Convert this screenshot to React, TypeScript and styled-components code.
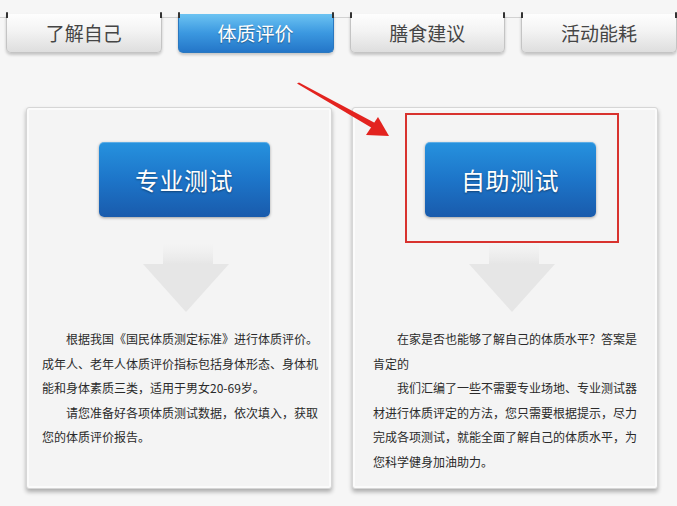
import React from "react";
import styled, { createGlobalStyle, css } from "styled-components";

const GlobalStyle = createGlobalStyle`
  html, body {
    margin: 0;
    padding: 0;
    background: #f6f6f6;
  }
  body {
    font-family: "Noto Sans CJK SC", "Noto Sans", sans-serif;
  }
`;

const tabs = ["了解自己", "体质评价", "膳食建议", "活动能耗"];

const panels = [
  {
    label: "专业测试",
    marked: false,
    textWidth: 277,
    textLeft: 15,
    paragraphs: [
      "根据我国《国民体质测定标准》进行体质评价。成年人、老年人体质评价指标包括身体形态、身体机能和身体素质三类，适用于男女20-69岁。",
      "请您准备好各项体质测试数据，依次填入，获取您的体质评价报告。",
    ],
  },
  {
    label: "自助测试",
    marked: true,
    textWidth: 265,
    textLeft: 20,
    paragraphs: [
      "在家是否也能够了解自己的体质水平？答案是肯定的",
      "我们汇编了一些不需要专业场地、专业测试器材进行体质评定的方法，您只需要根据提示，尽力完成各项测试，就能全面了解自己的体质水平，为您科学健身加油助力。",
    ],
  },
];

const Page = styled.div`
  position: relative;
  width: 677px;
  height: 506px;
  overflow: hidden;
  background: #f6f6f6;
`;

const TabBar = styled.div`
  display: flex;
  gap: 16px;
  padding: 14px 0 0 6px;
  background: linear-gradient(#d2d2d2, #d2d2d2) 0 17px / 100% 1px no-repeat;
`;

const Tab = styled.div<{ $active?: boolean }>`
  position: relative;
  width: 154px;
  height: 36px;
  padding-bottom: 2px;
  display: flex;
  align-items: center;
  justify-content: center;
  font-size: 19px;
  color: #454545;
  border: 1px solid #c4c4c4;
  border-top: none;
  border-radius: 0 0 5px 5px;
  background: linear-gradient(#fefefe, #f3f3f3 45%, #dedede);
  box-shadow: 0 2px 3px rgba(0, 0, 0, 0.2);

  ${(p) =>
    p.$active &&
    css`
      color: #fff;
      border-color: #2a78c0;
      background: linear-gradient(#6cc3f2, #3b98e0 50%, #2476c8);
      text-shadow: 0 1px 1px rgba(0, 0, 0, 0.35);
    `}

  &::before,
  &::after {
    content: "";
    position: absolute;
    top: -2px;
    width: 2px;
    height: 6px;
    background: #333;
    border-radius: 1px 1px 0 0;
  }
  &::before {
    left: -1px;
  }
  &::after {
    right: -1px;
  }
`;

const PanelRow = styled.div`
  display: flex;
  gap: 20px;
  padding: 54px 0 0 26px;
`;

const Panel = styled.div`
  width: 304px;
  height: 380px;
  display: flex;
  flex-direction: column;
  background: #f4f4f4;
  border: 1px solid #d6d6d6;
  border-radius: 3px;
  box-shadow: inset 0 0 0 2px #fbfbfb, 0 3px 4px rgba(0, 0, 0, 0.3);
`;

const Visual = styled.div`
  display: flex;
  flex-direction: column;
  align-items: center;
  padding: 5px 0 0 13px;
`;

const Highlight = styled.div<{ $marked?: boolean }>`
  padding: 27px 21px 24px 18px;
  border: 2px solid ${(p) => (p.$marked ? "#d8322e" : "transparent")};
`;

const BlueButton = styled.div`
  width: 171px;
  height: 75px;
  display: flex;
  align-items: center;
  justify-content: center;
  border-radius: 5px;
  background: linear-gradient(#2692de, #1d75c9 50%, #195bac);
  box-shadow: 0 1px 3px rgba(0, 0, 0, 0.35), inset 0 1px 0 rgba(255, 255, 255, 0.25);
  color: #fff;
  font-size: 24px;
  letter-spacing: 0.5px;
  text-shadow: 0 1px 2px rgba(0, 0, 0, 0.4);
`;

const DownArrow = styled.svg`
  display: block;
`;

const Text = styled.div<{ $left: number; $width: number }>`
  margin: 14px 0 0 ${(p) => p.$left}px;
  width: ${(p) => p.$width}px;
  font-size: 12px;
  line-height: 24.5px;
  color: #2a2a2a;
`;

const Para = styled.p`
  margin: 0;
  text-indent: 2em;
`;

const Pointer = styled.svg`
  position: absolute;
  left: 292px;
  top: 78px;
`;

const GrayArrow = () => (
  <DownArrow width="86" height="70" viewBox="0 0 86 70">
    <defs>
      <linearGradient id="shaft" x1="0" y1="0" x2="0" y2="1">
        <stop offset="0" stopColor="#ececec" stopOpacity="0" />
        <stop offset="1" stopColor="#e6e6e6" />
      </linearGradient>
    </defs>
    <rect x="20" y="0" width="50" height="21" fill="url(#shaft)" />
    <polygon points="0,21 86,21 43,69" fill="#e6e6e6" />
  </DownArrow>
);

export default function App() {
  return (
    <Page>
      <GlobalStyle />
      <TabBar>
        {tabs.map((t, i) => (
          <Tab key={t} $active={i === 1}>
            {t}
          </Tab>
        ))}
      </TabBar>
      <PanelRow>
        {panels.map((p) => (
          <Panel key={p.label}>
            <Visual>
              <Highlight $marked={p.marked}>
                <BlueButton>{p.label}</BlueButton>
              </Highlight>
              <GrayArrow />
            </Visual>
            <Text $left={p.textLeft} $width={p.textWidth}>
              {p.paragraphs.map((s) => (
                <Para key={s}>{s}</Para>
              ))}
            </Text>
          </Panel>
        ))}
      </PanelRow>
      <Pointer width="110" height="70" viewBox="0 0 110 70">
        <polygon points="5,5.5 7,4.5 83,45 80,50" fill="#e3231f" />
        <polygon points="97,58 74,57 86,39" fill="#e3231f" />
      </Pointer>
    </Page>
  );
}
